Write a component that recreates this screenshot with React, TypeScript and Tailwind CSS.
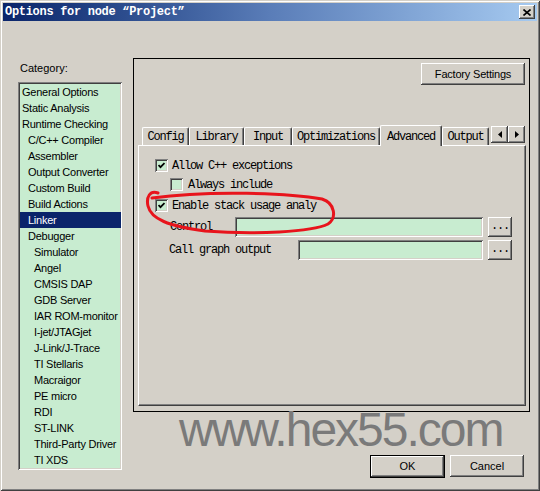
import React from "react";

const raised =
  "shadow-[inset_-1px_-1px_0_#404040,inset_1px_1px_0_#ffffff,inset_-2px_-2px_0_#808080,inset_2px_2px_0_#d4d0c8]";
const sunken =
  "shadow-[inset_1px_1px_0_#808080,inset_-1px_-1px_0_#ffffff,inset_2px_2px_0_#404040,inset_-2px_-2px_0_#d4d0c8]";
const mono = "font-['Liberation_Mono','DejaVu_Sans_Mono',monospace]";
const sans = "font-['Liberation_Sans',Arial,sans-serif]";

type Item = { label: string; level: 0 | 1 | 2 };

const categories: Item[] = [
  { label: "General Options", level: 0 },
  { label: "Static Analysis", level: 0 },
  { label: "Runtime Checking", level: 0 },
  { label: "C/C++ Compiler", level: 1 },
  { label: "Assembler", level: 1 },
  { label: "Output Converter", level: 1 },
  { label: "Custom Build", level: 1 },
  { label: "Build Actions", level: 1 },
  { label: "Linker", level: 1 },
  { label: "Debugger", level: 1 },
  { label: "Simulator", level: 2 },
  { label: "Angel", level: 2 },
  { label: "CMSIS DAP", level: 2 },
  { label: "GDB Server", level: 2 },
  { label: "IAR ROM-monitor", level: 2 },
  { label: "I-jet/JTAGjet", level: 2 },
  { label: "J-Link/J-Trace", level: 2 },
  { label: "TI Stellaris", level: 2 },
  { label: "Macraigor", level: 2 },
  { label: "PE micro", level: 2 },
  { label: "RDI", level: 2 },
  { label: "ST-LINK", level: 2 },
  { label: "Third-Party Driver", level: 2 },
  { label: "TI XDS", level: 2 },
];

const tabs = [
  { label: "Config", w: "w-[47px]" },
  { label: "Library", w: "w-[55px]" },
  { label: "Input", w: "w-[48px]" },
  { label: "Optimizations", w: "w-[88px]" },
  { label: "Advanced", w: "w-[62px]", active: true },
  { label: "Output", w: "w-[47px]" },
];

function CheckBox({ checked }: { checked?: boolean }) {
  return (
    <div
      className={`w-[13px] h-[13px] shrink-0 bg-[#c8ecd0] flex items-center justify-center ${sunken}`}
    >
      {checked && (
        <svg width="7" height="7" viewBox="0 0 7 7">
          <polyline
            points="0.5,3 2.5,5.2 6.5,1"
            fill="none"
            stroke="#000"
            strokeWidth="1.8"
          />
        </svg>
      )}
    </div>
  );
}

function DotsButton() {
  return (
    <div
      className={`w-[24px] h-[20px] ml-[5px] flex items-end justify-center pb-[5px] text-[12px] leading-none ${mono} ${raised}`}
    >
      ...
    </div>
  );
}

function Arrow({ dir }: { dir: "left" | "right" }) {
  return (
    <div
      className={`w-[17px] h-[17px] flex items-center justify-center bg-[#d4d0c8] ${raised}`}
    >
      <svg width="4" height="7" viewBox="0 0 4 7">
        {dir === "left" ? (
          <polygon points="4,0 4,7 0,3.5" fill="#000" />
        ) : (
          <polygon points="0,0 0,7 4,3.5" fill="#000" />
        )}
      </svg>
    </div>
  );
}

export default function App() {
  return (
    <div
      className={`relative w-[540px] h-[491px] overflow-hidden bg-[#d4d0c8] p-[3px] flex flex-col text-black shadow-[inset_1px_1px_0_#d4d0c8,inset_-1px_-1px_0_#404040,inset_2px_2px_0_#ffffff,inset_-2px_-2px_0_#808080]`}
    >
      {/* title bar */}
      <div className="h-[18px] shrink-0 flex items-center justify-between pl-[2px] pr-[2px] bg-gradient-to-r from-[#0a246a] via-[#5a7db8] to-[#a6caf0]">
        <span
          className={`text-white font-bold text-[12px] tracking-[-0.3px] leading-none ${mono}`}
        >
          Options for node “Project”
        </span>
        <div
          className={`w-[16px] h-[14px] bg-[#d4d0c8] flex items-center justify-center ${raised}`}
        >
          <svg width="8" height="7" viewBox="0 0 8 7">
            <path d="M0.5 0.5 L7.5 6.5 M7.5 0.5 L0.5 6.5" stroke="#000" strokeWidth="1.6" />
          </svg>
        </div>
      </div>

      <div className="flex pl-[15px]">
        {/* category list */}
        <div className={`w-[104px] pt-[41px] ${sans}`}>
          <div className="text-[11px] leading-[13px] pl-[2px]">Category:</div>
          <div className={`mt-[7px] bg-[#c8ecd0] p-[2px] pr-[1px] ${sunken}`}>
            {categories.map((c) => (
              <div
                key={c.label}
                className={`h-[16px] leading-[16px] text-[11px] tracking-[-0.25px] whitespace-nowrap ${
                  c.level === 0 ? "pl-[2px]" : c.level === 1 ? "pl-[8px]" : "pl-[14px]"
                } ${c.label === "Linker" ? "bg-[#0a246a] text-white" : ""}`}
              >
                {c.label}
              </div>
            ))}
          </div>
        </div>

        {/* right side */}
        <div className="ml-[11px] w-[397px] pt-[37px] flex flex-col">
          <div className="h-[354px] border border-black flex flex-col">
            <div className="flex justify-end pt-[4px] pr-[4px]">
              <div
                className={`w-[104px] h-[22px] flex items-center justify-center text-[11px] tracking-[-0.2px] ${sans} ${raised}`}
              >
                Factory Settings
              </div>
            </div>

            {/* tabs */}
            <div className="mt-[40px] h-[20px] flex items-end pl-[8px] relative z-10">
              {tabs.map((t) =>
                t.active ? (
                  <div
                    key={t.label}
                    className={`${t.w} h-[21px] -mb-[1px] bg-[#d4d0c8] border-l border-t border-white border-r border-r-[#404040] shadow-[inset_-1px_0_0_#808080] rounded-t-[2px] flex items-start justify-center pt-[2px] text-[12px] tracking-[-1.2px] ${mono}`}
                  >
                    {t.label}
                  </div>
                ) : (
                  <div
                    key={t.label}
                    className={`${t.w} h-[18px] border-l border-t border-white border-r border-r-[#404040] shadow-[inset_-1px_0_0_#808080] rounded-t-[2px] flex items-center justify-center text-[12px] tracking-[-1.2px] ${mono}`}
                  >
                    {t.label}
                  </div>
                ),
              )}
              <div className="self-start mt-[1px] ml-[2px] flex">
                <Arrow dir="left" />
                <Arrow dir="right" />
              </div>
            </div>

            {/* tab page */}
            <div
              className={`flex-1 ml-[4px] mr-[3px] mb-[5px] border-l border-t border-white border-r border-b border-r-[#404040] border-b-[#404040] shadow-[inset_-1px_-1px_0_#808080] pl-[16px] pt-[13px] text-[12px] tracking-[-1.2px] ${mono}`}
            >
              <div className="flex items-center h-[13px]">
                <CheckBox checked />
                <span className="ml-[4px]">Allow C++ exceptions</span>
              </div>
              <div className="flex items-center h-[13px] mt-[6px] ml-[15px]">
                <CheckBox />
                <span className="ml-[5px]">Always include</span>
              </div>
              <div className="flex items-center h-[13px] mt-[8px]">
                <CheckBox checked />
                <span className="ml-[4px] whitespace-nowrap">Enable stack usage analy</span>
              </div>
              <div className="flex items-center h-[20px] mt-[5px] ml-[15px]">
                <span className="w-[65px]">Control</span>
                <div className={`w-[248px] h-[20px] bg-[#c8ecd0] ${sunken}`} />
                <DotsButton />
              </div>
              <div className="flex items-center h-[20px] mt-[3px] ml-[14px]">
                <span className="w-[129px]">Call graph output</span>
                <div className={`w-[185px] h-[20px] bg-[#c8ecd0] ${sunken}`} />
                <DotsButton />
              </div>
            </div>
          </div>

          {/* dialog buttons */}
          <div className={`mt-[43px] flex justify-end gap-[5px] pr-[6px] text-[11px] ${sans}`}>
            <div className="w-[75px] h-[23px] border border-black">
              <div className={`w-full h-full flex items-center justify-center ${raised}`}>
                OK
              </div>
            </div>
            <div className={`w-[74px] h-[22px] flex items-center justify-center ${raised}`}>
              Cancel
            </div>
          </div>
        </div>
      </div>

      {/* red hand-drawn mark */}
      <svg
        className="absolute left-0 top-0 pointer-events-none"
        width="540"
        height="491"
        viewBox="0 0 540 491"
      >
        <path
          d="M158 193 C150 190, 146 197, 148 206 C151 219, 168 226, 205 231 C255 235, 312 232, 328 224 C337 218, 335 203, 322 199 C290 193, 210 190, 152 198"
          fill="none"
          stroke="#e8141c"
          strokeWidth="3"
          strokeLinecap="round"
        />
      </svg>

      {/* watermark */}
      <div
        className={`absolute left-[179px] top-[406px] text-[48px] leading-none tracking-[-2px] text-[#7a7a7a] pointer-events-none ${sans}`}
      >
        www.hex55.com
      </div>
    </div>
  );
}
